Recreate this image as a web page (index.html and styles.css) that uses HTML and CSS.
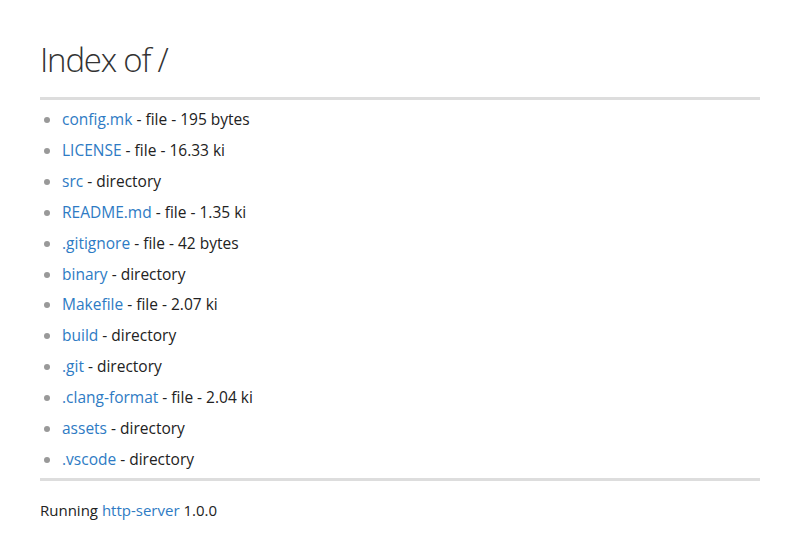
FILE: index.html
```html
<!DOCTYPE html>
<html>
<head>
<meta charset="utf-8">
<title>Index of /</title>
<link rel="stylesheet" href="styles.css">
</head>
<body>
<div class="page">
  <h1 class="title">Index of /</h1>
  <ul class="listing">
    <li><a href="#">config.mk</a> - file - 195 bytes</li>
    <li><a href="#">LICENSE</a> - file - 16.33 ki</li>
    <li><a href="#">src</a> - directory</li>
    <li><a href="#">README.md</a> - file - 1.35 ki</li>
    <li><a href="#">.gitignore</a> - file - 42 bytes</li>
    <li><a href="#">binary</a> - directory</li>
    <li><a href="#">Makefile</a> - file - 2.07 ki</li>
    <li><a href="#">build</a> - directory</li>
    <li><a href="#">.git</a> - directory</li>
    <li><a href="#">.clang-format</a> - file - 2.04 ki</li>
    <li><a href="#">assets</a> - directory</li>
    <li><a href="#">.vscode</a> - directory</li>
  </ul>
  <p class="footer">Running <a href="#">http-server</a> 1.0.0</p>
</div>
</body>
</html>
```
FILE: styles.css
```css
html, body {
  margin: 0;
  padding: 0;
  background: #fff;
}
body {
  font-family: "Open Sans", "Noto Sans", sans-serif;
  color: #222;
  font-size: 15px;
}
.page {
  padding: 28px 40px 0 40px;
}
.title {
  margin: 0;
  font-weight: 300;
  font-size: 33px;
  letter-spacing: -1.2px;
  line-height: 64px;
  color: #333;
  padding-bottom: 5px;
  border-bottom: 3px solid #ddd;
}
a {
  color: #2e7bc4;
  text-decoration: none;
}
.listing {
  margin: 0;
  padding: 4px 0 3px 22px;
  border-bottom: 3px solid #ddd;
  font-size: 15.5px;
}
.listing li {
  line-height: 30.9px;
}
.listing li::marker {
  color: #999;
}
.footer {
  margin: 0;
  padding-top: 15px;
  line-height: 28px;
}
```
